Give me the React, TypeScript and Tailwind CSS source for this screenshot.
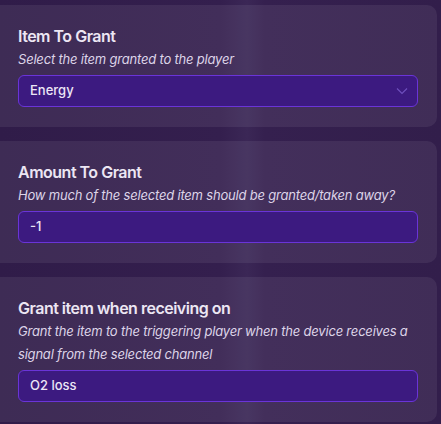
const FONT = 'font-["Inter","Liberation_Sans",sans-serif]';

function Card({
  title,
  hint,
  value,
  select,
}: {
  title: string;
  hint: string;
  value: string;
  select?: boolean;
}) {
  return (
    <div className="rounded-r-[10px] bg-[#ffffff12] pb-5 pl-[18px] pr-[19px] pt-[19px]">
      <div className="text-[16px] font-semibold leading-6 tracking-[-0.5px] text-[#ece6f3]">{title}</div>
      <div className="text-[13px] italic leading-[23px] tracking-[-0.2px] text-[#ddd4e8]">{hint}</div>
      <div className="mt-1 flex h-8 items-center justify-between rounded-md border border-[#6a34d8] bg-[#3c1a80] pl-[11px] pr-[9px] text-[13px] font-medium text-[#ece6f6]">
        <span>{value}</span>
        {select && (
          <svg width="12" height="8" viewBox="0 0 12 8" fill="none">
            <path d="M1 1.5 6 6.5 11 1.5" stroke="#6f50bd" strokeWidth="1.1" />
          </svg>
        )}
      </div>
    </div>
  );
}

export default function App() {
  return (
    <div
      className={`${FONT} flex h-[424px] w-[441px] flex-col gap-[14px] overflow-hidden bg-[linear-gradient(90deg,#301c49_0%,#341f4e_50%,#3b2756_56%,#35204f_60%,#321e4b_100%)] pr-1 pt-[5px]`}
    >
      <Card title="Item To Grant" hint="Select the item granted to the player" value="Energy" select />
      <Card
        title="Amount To Grant"
        hint="How much of the selected item should be granted/taken away?"
        value="-1"
      />
      <Card
        title="Grant item when receiving on"
        hint="Grant the item to the triggering player when the device receives a signal from the selected channel"
        value="O2 loss"
      />
    </div>
  );
}
